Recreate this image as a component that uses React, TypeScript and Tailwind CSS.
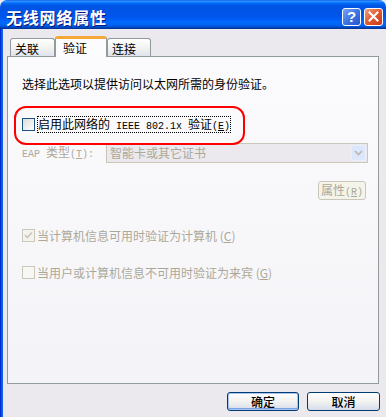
import React from "react";

function Mono({ children }: { children: React.ReactNode }) {
  return <span className="font-['Liberation_Mono',monospace] text-[10px] whitespace-pre">{children}</span>;
}

function U({ children }: { children: React.ReactNode }) {
  return <span className="underline underline-offset-[1px]">{children}</span>;
}

export default function App() {
  return (
    <div className="w-[386px] h-[417px] overflow-hidden flex flex-col font-['Noto_Sans_CJK_SC',sans-serif] text-[12px] text-black bg-[#ebe9ed]">
      {/* Title bar */}
      <div className="h-[29px] shrink-0 flex items-center pl-[6px] pr-[3px] pt-[4px] rounded-t-[7px] bg-[linear-gradient(to_bottom,#0058ee_0%,#3593ff_4%,#288eff_6%,#127dff_8%,#036ffc_10%,#0262ee_14%,#0057e5_20%,#0054e3_24%,#0055eb_56%,#005bf5_66%,#026afe_76%,#0062ef_86%,#0052d6_92%,#0040ab_96%,#003092_100%)]">
        <span className="text-white font-bold text-[16px] tracking-[0.8px] leading-none [text-shadow:1px_1px_0_#0a1883]">
          无线网络属性
        </span>
        <div className="ml-auto flex gap-[3px]">
          <div className="w-[19px] h-[18px] rounded-[3px] border border-white bg-[linear-gradient(to_bottom_right,#7aa4f0,#3d74e6_50%,#2456cf)] flex items-center justify-center">
            <span className="text-white font-bold text-[15px] leading-none font-['Liberation_Sans',sans-serif]">?</span>
          </div>
          <div className="w-[19px] h-[18px] rounded-[3px] border border-white bg-[linear-gradient(to_bottom_right,#f0a080,#e2582f_50%,#c4381a)] flex items-center justify-center">
            <svg width="11" height="11" viewBox="0 0 11 11">
              <path d="M1.5 1.5 L9.5 9.5 M9.5 1.5 L1.5 9.5" stroke="white" strokeWidth="2" strokeLinecap="square" />
            </svg>
          </div>
        </div>
      </div>

      <div className="flex flex-1 min-h-0">
        <div className="w-[3px] shrink-0 bg-[linear-gradient(to_right,#0019cf,#0855dd,#166aee)]" />
        <div className="flex-1 flex flex-col pl-[4px] pr-[6px]">
          {/* Tabs */}
          <div className="h-[27px] shrink-0 flex items-end pl-[3px]">
            <div className="w-[45px] h-[18px] border border-b-0 border-[#919b9c] rounded-t-[3px] bg-[linear-gradient(to_bottom,#ffffff,#f3f3f1_50%,#dfe3ec)] pl-[4px] pt-[2px] flex items-center leading-none">
              关联
            </div>
            <div className="relative z-10 mb-[-1px] w-[52px] h-[21px] border-x border-[#919b9c] border-t-[3px] border-t-[#f5a93a] rounded-t-[3px] bg-[#fcfcfe] pl-[7px] flex items-center leading-none">
              验证
            </div>
            <div className="w-[44px] h-[18px] border border-b-0 border-[#919b9c] rounded-t-[3px] bg-[linear-gradient(to_bottom,#ffffff,#f3f3f1_50%,#dfe3ec)] pl-[4px] pt-[2px] flex items-center leading-none">
              连接
            </div>
          </div>

          {/* Panel */}
          <div className="relative w-[372px] h-[328px] shrink-0 border border-[#919b9c] bg-[linear-gradient(to_bottom,#fbfbfd,#f4f4f8)] flex flex-col pl-[14px] pr-[10px]">
            <div className="mt-[19px] h-[16px] leading-[16px]">选择此选项以提供访问以太网所需的身份验证。</div>

            {/* Enable 802.1x */}
            <div className="mt-[24px] h-[17px] flex items-center">
              <div className="w-[13px] h-[13px] shrink-0 border border-[#1c5180] bg-[linear-gradient(to_bottom_right,#dcdcd7,#ffffff)]" />
              <div className="ml-[2px] h-[17px] w-[194px] border border-dotted border-black flex items-center leading-none">
                <span className="whitespace-nowrap">
                  启用此网络的<Mono>{" IEEE 802.1x "}</Mono>验证<Mono>(<U>E</U>)</Mono>
                </span>
              </div>
            </div>

            {/* EAP type */}
            <div className="mt-[10px] h-[20px] flex items-center">
              <div className="w-[84px] shrink-0 text-[#aca899] leading-none whitespace-nowrap">
                <Mono>{"EAP "}</Mono>类型<Mono>(<U>T</U>):</Mono>
              </div>
              <div className="w-[262px] h-[20px] border border-[#c9c7ba] bg-[#ebe9ed] flex items-center pl-[3px] pr-[1px]">
                <span className="text-[#aca899] leading-none">智能卡或其它证书</span>
                <div className="ml-auto w-[15px] h-[16px] rounded-[2px] border border-[#e8eefa] bg-[#dce7fb] flex items-center justify-center">
                  <svg width="9" height="6" viewBox="0 0 9 6">
                    <path d="M1 1 L4.5 4.5 L8 1" stroke="#b9b8ae" strokeWidth="1.6" fill="none" />
                  </svg>
                </div>
              </div>
            </div>

            {/* Properties */}
            <div className="mt-[18px] flex justify-end pr-[2px]">
              <div className="w-[48px] h-[19px] rounded-[3px] border border-[#c9c7ba] bg-[#f5f4ea] flex items-center justify-center text-[#aca899] leading-none">
                <span className="whitespace-nowrap">
                  属性<Mono>(<U>R</U>)</Mono>
                </span>
              </div>
            </div>

            {/* Checkbox 2 */}
            <div className="mt-[29px] h-[13px] flex items-center">
              <div className="w-[13px] h-[13px] border border-[#cac8bb] bg-[#f4f3ee] flex items-center justify-center">
                <svg width="11" height="11" viewBox="0 0 11 11">
                  <path d="M2 5 L4.3 7.5 L9 2.5" stroke="#cac8bb" strokeWidth="1.8" fill="none" />
                </svg>
              </div>
              <span className="ml-[2px] text-[#aca899] leading-none">当计算机信息可用时验证为计算机 (<U>C</U>)</span>
            </div>

            {/* Checkbox 3 */}
            <div className="mt-[24px] h-[13px] flex items-center">
              <div className="w-[13px] h-[13px] border border-[#cac8bb] bg-[#f7f7f4]" />
              <span className="ml-[2px] text-[#aca899] leading-none">当用户或计算机信息不可用时验证为来宾 (<U>G</U>)</span>
            </div>

            {/* Red annotation */}
            <div className="absolute left-[6px] top-[49px] w-[231px] h-[39px] border-2 border-[#ff0000] rounded-[12px] pointer-events-none" />
          </div>

          {/* Buttons */}
          <div className="mt-[8px] flex justify-end gap-[8px]">
            <div className="w-[72px] h-[19px] rounded-[3px] border border-[#003c74] shadow-[inset_0_0_0_1px_#a8c4f0,inset_0_-1px_0_1px_#7aa0e4] bg-[linear-gradient(to_bottom,#ffffff,#f2f2f0_50%,#d6dcec)] flex items-center justify-center leading-none font-medium">
              确定
            </div>
            <div className="w-[73px] h-[19px] rounded-[3px] border border-[#003c74] bg-[linear-gradient(to_bottom,#ffffff,#f2f2f0_50%,#d6dcec)] flex items-center justify-center leading-none font-medium">
              取消
            </div>
          </div>
        </div>
      </div>
    </div>
  );
}
